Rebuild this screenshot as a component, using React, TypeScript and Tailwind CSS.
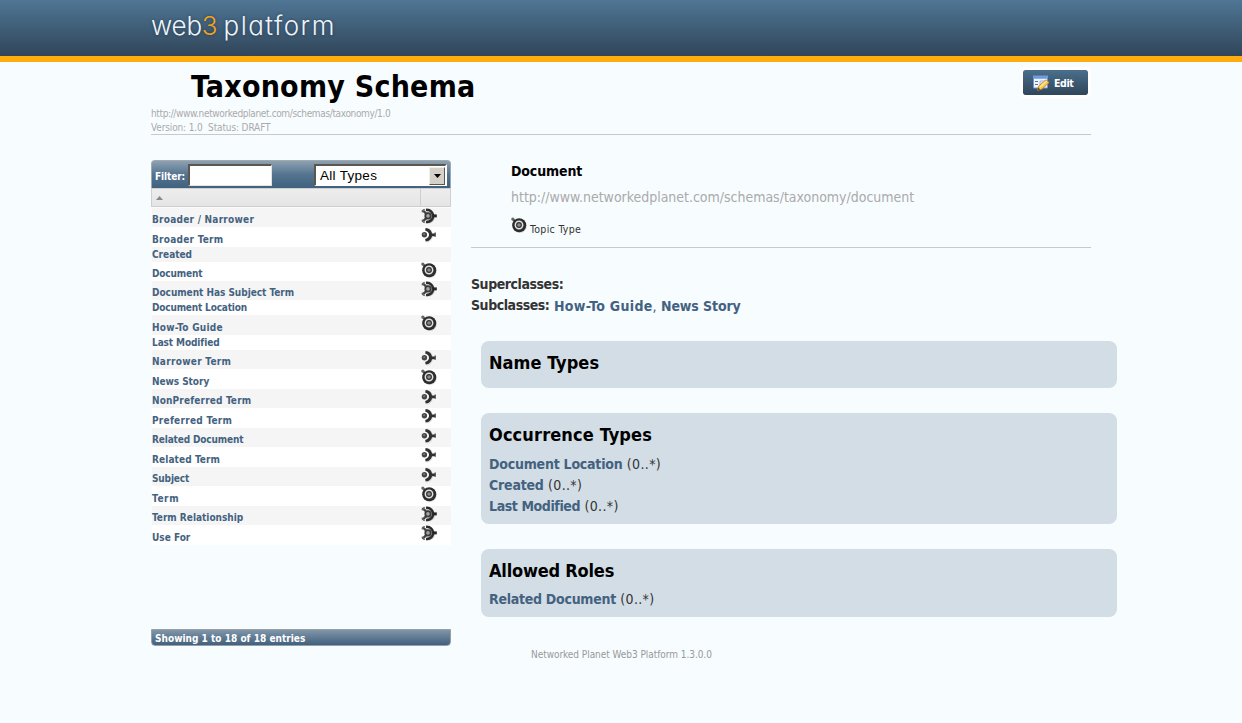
type Kind = "topic" | "role" | "assoc" | null;

const entries: { name: string; kind: Kind; tracking?: string }[] = [
  { name: "Broader / Narrower", kind: "assoc", tracking: "tracking-[0.25px]" },
  { name: "Broader Term", kind: "role", tracking: "tracking-[0.25px]" },
  { name: "Created", kind: null },
  { name: "Document", kind: "topic", tracking: "tracking-[-0.15px]" },
  { name: "Document Has Subject Term", kind: "assoc", tracking: "tracking-[-0.03px]" },
  { name: "Document Location", kind: null, tracking: "tracking-[-0.18px]" },
  { name: "How-To Guide", kind: "topic", tracking: "tracking-[0.25px]" },
  { name: "Last Modified", kind: null, tracking: "tracking-[-0.1px]" },
  { name: "Narrower Term", kind: "role", tracking: "tracking-[0.3px]" },
  { name: "News Story", kind: "topic", tracking: "tracking-[-0.05px]" },
  { name: "NonPreferred Term", kind: "role", tracking: "tracking-[0.16px]" },
  { name: "Preferred Term", kind: "role", tracking: "tracking-[0.27px]" },
  { name: "Related Document", kind: "role", tracking: "tracking-[-0.15px]" },
  { name: "Related Term", kind: "role", tracking: "tracking-[0.1px]" },
  { name: "Subject", kind: "role", tracking: "tracking-[-0.15px]" },
  { name: "Term", kind: "topic", tracking: "tracking-[0.6px]" },
  { name: "Term Relationship", kind: "assoc" },
  { name: "Use For", kind: "assoc" },
];

function TopicIcon() {
  return (
    <svg width="16" height="16" viewBox="0 0 16 16" fill="none" className="block shrink-0">
      <circle cx="8.8" cy="9" r="7" fill="#000" fillOpacity=".15" />
      <path d="M1.8 2.2 4.5 4.8" stroke="#555" strokeWidth="2.4" />
      <circle cx="1.8" cy="2" r="1.6" fill="#666" />
      <circle cx="8.2" cy="8.2" r="7" fill="#2d2d2d" />
      <circle cx="8" cy="8" r="3.7" stroke="#e2e2e2" strokeWidth="1.5" fill="#303030" />
      <circle cx="8" cy="8" r="1.8" fill="#8a8a8a" />
    </svg>
  );
}

function RoleIcon() {
  return (
    <svg width="16" height="16" viewBox="0 0 16 16" fill="none" className="block shrink-0">
      <path d="M5.4 2.4C11.8 3.4 11.8 13 5.4 14" stroke="#000" strokeOpacity=".1" strokeWidth="3.6" />
      <circle cx="3.4" cy="7.8" r="2.7" fill="#464646" />
      <circle cx="3.1" cy="7.1" r=".9" fill="#888" />
      <path d="M4.6 1.1C8.8 1.3 10.6 4.4 11 6.4H14V9.2H11C10.6 11.4 8.8 14.2 4.6 14.5L4.2 12C9.4 10.6 9.4 5 4.2 3.6z" fill="#303030" />
      <path d="M14.2 5.6v4.2" stroke="#444" strokeWidth="1.3" />
    </svg>
  );
}

function AssocIcon() {
  return (
    <svg width="16" height="16" viewBox="0 0 16 16" fill="none" className="block shrink-0">
      <path d="M5.4 3.4C14 2.4 15 14.8 5.6 14" stroke="#000" strokeOpacity=".16" strokeWidth="3.5" />
      <path d="M1.4 2 5 5.4M1.4 13.8 5 10.4" stroke="#444" strokeWidth="2.3" />
      <path d="M.8 4.2 3.6 1.2M.8 11.8l2.8 3" stroke="#666" strokeWidth="1.3" />
      <path d="M5 1.9C14.4 1.1 14.4 14.7 5 13.9" stroke="#2c2c2c" strokeWidth="2.5" />
      <path d="M12 7.9h3.8" stroke="#252525" strokeWidth="3" />
      <circle cx="7" cy="7.9" r="2.7" fill="#a5a5a5" stroke="#3a3a3a" strokeWidth="1.8" />
    </svg>
  );
}

function KindIcon({ kind }: { kind: Kind }) {
  if (kind === "topic") return <TopicIcon />;
  if (kind === "role") return <RoleIcon />;
  if (kind === "assoc") return <AssocIcon />;
  return null;
}

function EditIcon() {
  return (
    <svg width="17" height="16" viewBox="0 0 17 16" fill="none" className="block shrink-0">
      <path d="M.5 1.5h14v11.5H.5z" fill="#f3f7fd" stroke="#6b95d6" />
      <path d="M0 .5h15v3.3H0z" fill="#6e9be0" />
      <path d="M2 6.5h3M2 9.5h3" stroke="#4b76b8" strokeWidth="1.2" />
      <path d="M7 6h5.5v5H7z" fill="#dfe9f6" stroke="#8aa9d8" strokeWidth=".8" />
      <path d="m4.6 15.3 1-4.2 7.4-6.3 3.1 2.8-7.4 6.6z" fill="#f8c84a" stroke="#c98a28" strokeWidth=".9" />
      <path d="m7 11.9 6.6-5.8" stroke="#ffeaa0" strokeWidth="1.3" />
      <path d="m4.6 15.4.7-2.8 2 1.9z" fill="#6b4a22" />
    </svg>
  );
}

function Sidebar() {
  return (
    <aside className="flex h-[486px] w-[300px] shrink-0 flex-col">
      <div className="flex h-[28px] items-start rounded-t-[4px] border border-b-0 border-[#a3a8ad] bg-linear-to-b from-[#8da1b3] via-[#54748f] to-[#40627f] pt-[3px] pl-[3px]">
        <label className="flex items-start text-[10px] leading-[14px] font-bold text-white">
          <span className="w-[33px] pt-[6px] tracking-[-0.1px]">Filter:</span>
          <input
            type="text"
            className="block h-[22px] w-[84px] border-t-2 border-r border-b border-l-2 border-t-[#5a5650] border-r-[#e6e3dc] border-b-[#e6e3dc] border-l-[#5a5650] bg-white outline-none"
          />
        </label>
        <button
          type="button"
          className="ml-[42px] flex h-[22px] w-[133px] items-center border-t-2 border-r-2 border-b border-l-2 border-t-[#5a5650] border-r-white border-b-white border-l-[#5a5650] bg-white pl-[4px] text-left font-['Liberation_Sans',sans-serif] text-[13.5px] text-black"
        >
          <span className="flex-1 pt-px leading-[18px] tracking-[0.3px]">All Types</span>
          <span className="flex h-[18px] w-[16px] items-center justify-center border border-t-[#f1efea] border-r-[#5a5650] border-b-[#5a5650] border-l-[#f1efea] bg-[#d5d1c9]">
            <svg width="7" height="4" viewBox="0 0 7 4">
              <path d="M0 0h7L3.5 4z" fill="#000" />
            </svg>
          </span>
        </button>
      </div>
      <div className="flex h-[19px] border border-[#cfcfcf] bg-linear-to-b from-[#ededed] to-[#e5e5e5]">
        <div className="flex flex-1 items-center border-r border-[#cfcfcf] pl-[4px]">
          <svg width="7" height="4" viewBox="0 0 7 4">
            <path d="M0 4h7L3.5 0z" fill="#888" />
          </svg>
        </div>
        <div className="w-[29px]" />
      </div>
      <ul className="ml-px pt-[0.6px]">
        {entries.map((e, i) => (
          <li
            key={e.name}
            className={`flex ${e.kind ? "h-[19.48px]" : "h-[15px]"} ${i % 2 ? "bg-white" : "bg-[#f5f5f5]"}`}
          >
            <a
              className={`w-[269px] self-end text-[10px] leading-[15px] font-bold text-[#436280] ${e.tracking ?? ""}`}
            >
              {e.name}
            </a>
            <KindIcon kind={e.kind} />
          </li>
        ))}
      </ul>
      <div className="mt-auto h-[17px] rounded-b-[4px] border border-[#9b9ea3] bg-linear-to-b from-[#8096a9] to-[#41617e] pl-[3px] text-[10px] leading-[17px] font-bold tracking-[0.02px] text-white">
        Showing 1 to 18 of 18 entries
      </div>
    </aside>
  );
}

type Item = { name: string; tracking: string };

function Panel({ title, titleClass, className, items }: { title: string; titleClass: string; className: string; items: Item[] }) {
  return (
    <section className={`ml-[10px] w-[636px] rounded-[8px] bg-[#d3dde5] px-[8px] pt-[9px] ${className}`}>
      <h2 className={`text-[18px] leading-[26px] font-bold text-black ${titleClass}`}>{title}</h2>
      {items.map((it) => (
        <p key={it.name} className="text-[14px] leading-[21px] tracking-[0.35px]">
          <a className={`font-bold text-[#436280] ${it.tracking}`}>{it.name}</a> (0..*)
        </p>
      ))}
    </section>
  );
}

export default function App() {
  return (
    <div className="h-[723px] overflow-hidden bg-[#f7fcff] font-['DejaVu_Sans_Condensed','DejaVu_Sans',sans-serif] text-[#333]">
      <header className="h-[62px] border-b-[6px] border-[#ffac0f] bg-linear-to-b from-[#4f7695] to-[#30465a] pt-[9px] pl-[151px]">
        <div className="font-['Inter',sans-serif] text-[26px] leading-[34px] font-[350] text-[#eef5fa] [font-feature-settings:'cv11'] [text-shadow:0_0_3px_rgba(20,40,60,0.6)]">
          <span className="tracking-[-0.2px]">web</span>
          <span className="mr-[7px] tracking-[-1px] text-[#f5a31a]">3</span>
          <span className="tracking-[1.45px]">platform</span>
        </div>
      </header>

      <div className="ml-[151px] w-[966px]">
        <div className="flex h-[73px] w-[940px] justify-between border-b border-[#c9c9c9] pt-[5px]">
          <div className="pt-[2px] text-[10px] leading-[14px] text-[#aaa]">
            <h1 className="mb-[2px] pl-[40px] text-[30px] leading-[36px] font-bold tracking-[0.24px] text-black">
              Taxonomy Schema
            </h1>
            <p className="tracking-[-0.36px]">http://www.networkedplanet.com/schemas/taxonomy/1.0</p>
            <p className="tracking-[-0.13px] whitespace-pre">{"Version: 1.0  Status: DRAFT"}</p>
          </div>
          <button
            type="button"
            className="flex h-[31px] w-[71px] items-center rounded-[5px] border-[3px] border-white bg-linear-to-b from-[#4a6f8d] to-[#30465a] bg-clip-padding pl-[10px] text-[10.5px] font-bold text-white"
          >
            <EditIcon />
            <span className="ml-[4px] pt-[2px] tracking-[-0.4px]">Edit</span>
          </button>
        </div>

        <div className="flex pt-[25px]">
          <Sidebar />
          <main className="ml-[20px] w-[646px]">
            <div className="h-[88px] w-[620px] border-b border-[#c9c9c9] pl-[40px]">
              <h3 className="text-[14px] leading-[22px] font-bold tracking-[-0.12px] text-black">Document</h3>
              <p className="mt-[4px] text-[14px] leading-[22px] tracking-[-0.02px] text-[#aaa]">
                http://www.networkedplanet.com/schemas/taxonomy/document
              </p>
              <div className="mt-[9px] flex">
                <TopicIcon />
                <span className="ml-[3px] pt-[5px] text-[10.5px] leading-[15px] tracking-[0.3px]">Topic Type</span>
              </div>
            </div>
            <div className="mt-[26px] mb-[24px] text-[14px] leading-[21px] font-bold">
              <p className="tracking-[-0.45px]">Superclasses:</p>
              <p className="flex">
                <span className="w-[83px] tracking-[-0.45px]">Subclasses:</span>
                <span className="pt-px text-[#436280]">
                  <a className="tracking-[0.3px]">How-To Guide</a>
                  <span className="font-normal">,</span> <a className="tracking-[-0.1px]">News Story</a>
                </span>
              </p>
            </div>
            <Panel title="Name Types" titleClass="tracking-[0.04px]" className="h-[47px]" items={[]} />
            <Panel
              title="Occurrence Types"
              titleClass="mb-[6px] tracking-[0.13px]"
              className="mt-[25px] h-[111px]"
              items={[
                { name: "Document Location", tracking: "tracking-[-0.22px]" },
                { name: "Created", tracking: "tracking-[-0.2px]" },
                { name: "Last Modified", tracking: "tracking-[-0.4px]" },
              ]}
            />
            <Panel
              title="Allowed Roles"
              titleClass="mb-[5px] tracking-[-0.2px]"
              className="mt-[25px] h-[68px]"
              items={[{ name: "Related Document", tracking: "tracking-[-0.27px]" }]}
            />
            <footer className="mt-[30px] pl-[60px] text-[10px] leading-[15px] tracking-[-0.05px] text-[#999]">
              Networked Planet Web3 Platform 1.3.0.0
            </footer>
          </main>
        </div>
      </div>
    </div>
  );
}
